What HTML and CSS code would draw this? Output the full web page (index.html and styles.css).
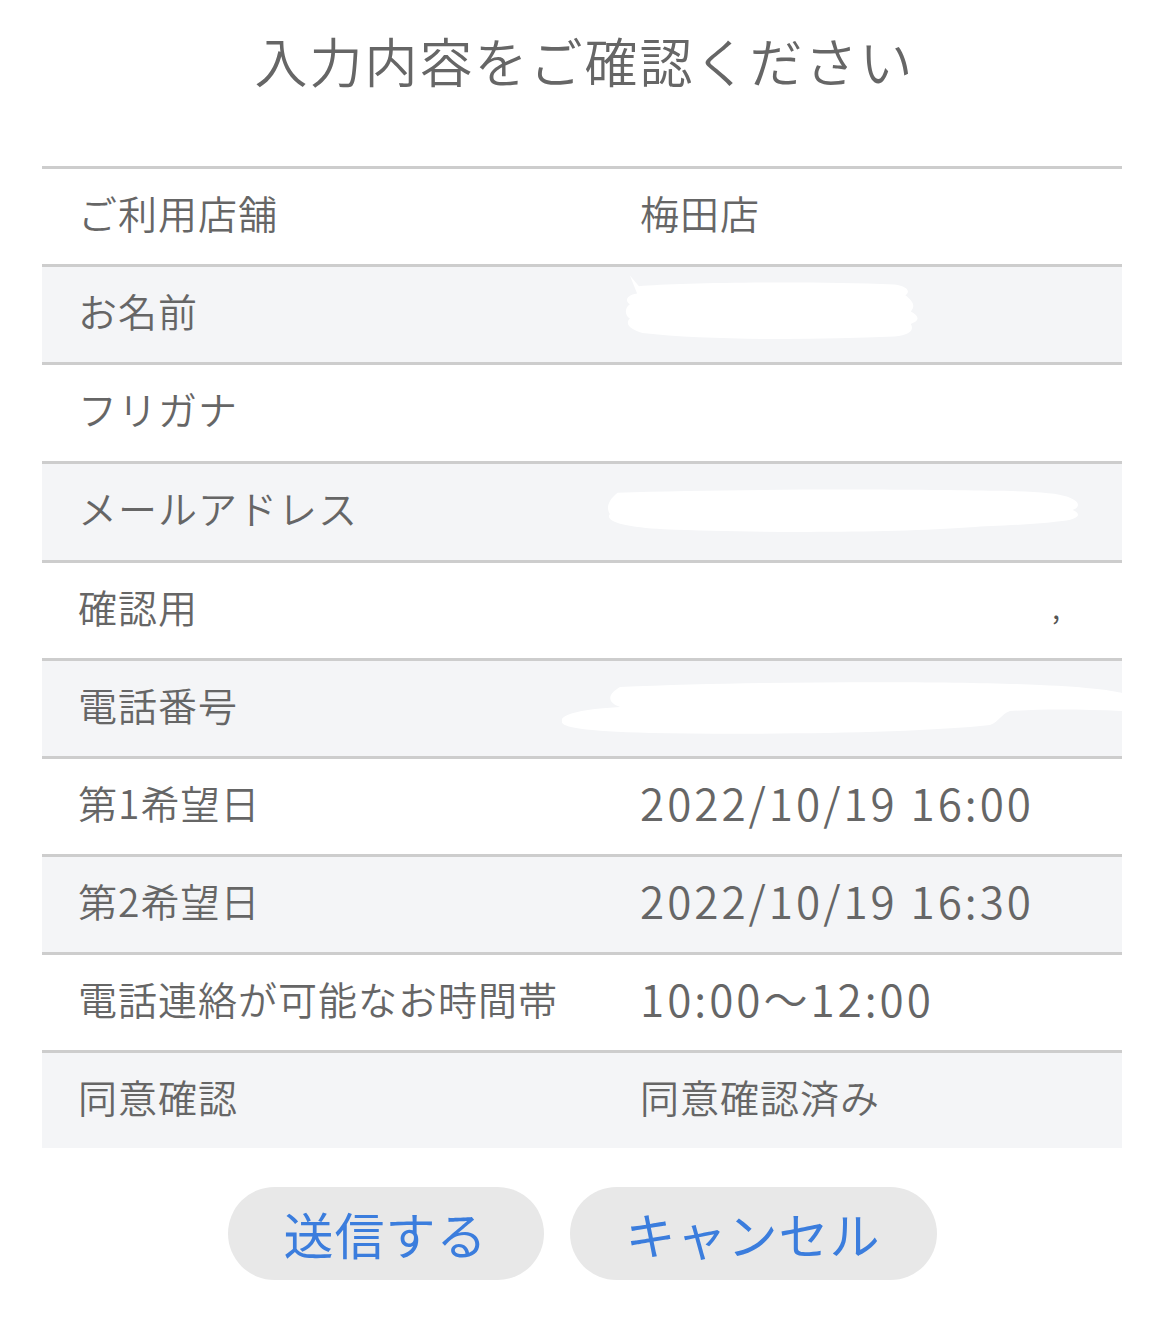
FILE: index.html
```html
<!DOCTYPE html>
<html lang="ja">
<head>
<meta charset="utf-8">
<title>入力内容をご確認ください</title>
<link rel="stylesheet" href="styles.css">
</head>
<body>
<main class="page">
  <h1 class="title">入力内容をご確認ください</h1>
  <div class="table">
    <div class="row">
      <div class="label">ご利用店舗</div>
      <div class="value">梅田店</div>
    </div>
    <div class="row alt">
      <div class="label">お名前</div>
      <div class="value">
        <svg class="mask mask-name" viewBox="0 0 330 80" aria-hidden="true">
          <path d="M6 6 L16 18 C60 14 200 12 300 16 C315 18 318 24 312 28 C320 34 324 40 318 46 C326 50 330 56 318 60 C322 66 318 72 300 74 C200 78 90 78 20 70 C6 66 0 60 6 54 C0 50 0 42 6 38 C0 34 2 28 14 26 Z" fill="#ffffff"/>
        </svg>
      </div>
    </div>
    <div class="row">
      <div class="label">フリガナ</div>
      <div class="value"></div>
    </div>
    <div class="row alt">
      <div class="label">メールアドレス</div>
      <div class="value">
        <svg class="mask mask-mail" viewBox="0 0 500 50" aria-hidden="true">
          <path d="M12 6 C120 2 300 2 400 4 C440 4 470 6 480 10 C492 14 496 20 486 24 C496 28 494 34 470 36 C440 40 400 40 380 42 C300 48 160 48 60 44 C20 42 -2 36 4 28 C0 22 2 14 12 6 Z" fill="#ffffff"/>
        </svg>
      </div>
    </div>
    <div class="row">
      <div class="label">確認用</div>
      <div class="value"><span class="frag">,</span></div>
    </div>
    <div class="row alt">
      <div class="label">電話番号</div>
      <div class="value">
        <svg class="mask mask-tel" viewBox="0 0 562 56" aria-hidden="true">
          <path d="M60 6 C200 0 400 0 480 4 C530 6 555 10 562 12 L562 30 C520 28 480 28 450 30 C440 34 440 40 430 44 C360 52 200 54 90 52 C20 50 0 46 2 40 C0 34 20 28 60 26 C48 22 46 14 60 6 Z" fill="#ffffff"/>
        </svg>
      </div>
    </div>
    <div class="row">
      <div class="label">第1希望日</div>
      <div class="value num">2022/10/19 16:00</div>
    </div>
    <div class="row alt">
      <div class="label">第2希望日</div>
      <div class="value num">2022/10/19 16:30</div>
    </div>
    <div class="row">
      <div class="label">電話連絡が可能なお時間帯</div>
      <div class="value num">10:00～12:00</div>
    </div>
    <div class="row alt last">
      <div class="label">同意確認</div>
      <div class="value">同意確認済み</div>
    </div>
  </div>
  <div class="actions">
    <button class="btn" type="button">送信する</button>
    <button class="btn" type="button">キャンセル</button>
  </div>
</main>
</body>
</html>
```
FILE: styles.css
```css
html, body {
  margin: 0;
  padding: 0;
  background: #ffffff;
}
body {
  font-family: "Noto Sans CJK JP", "Noto Sans", sans-serif;
  color: #666666;
}
.page {
  width: 1169px;
}
.title {
  margin: 0;
  padding-top: 22px;
  font-size: 53px;
  line-height: 76px;
  font-weight: 350;
  letter-spacing: 2px;
  text-align: center;
  color: #666666;
}
.table {
  margin: 68px 47px 0 42px;
  width: 1080px;
}
.row {
  display: grid;
  grid-template-columns: 598px 1fr;
  align-items: center;
  box-sizing: content-box;
  height: 85px;
  padding-bottom: 10px;
  border-top: 3px solid #cdcdcd;
  background: #ffffff;
  font-size: 39px;
  font-weight: 350;
  letter-spacing: 1px;
}
.row:nth-child(3), .row:nth-child(4) { height: 86px; }
.row.alt {
  background: #f4f5f7;
}
.label {
  padding-left: 36px;
  white-space: nowrap;
}
.value {
  position: relative;
  height: 100%;
  display: flex;
  align-items: center;
  white-space: nowrap;
}
.value.num {
  font-size: 44px;
  letter-spacing: 3px;
}
.mask {
  position: absolute;
  display: block;
}
.mask-name {
  left: -32px;
  top: 3px;
  width: 330px;
  height: 72px;
}
.mask-mail {
  left: -40px;
  top: 23px;
  width: 492px;
  height: 48px;
}
.mask-tel {
  left: -80px;
  top: 20px;
  width: 562px;
  height: 56px;
}
.frag {
  position: absolute;
  left: 412px;
  top: 21px;
  font-size: 30px;
  color: #555;
}
.actions {
  display: flex;
  justify-content: center;
  gap: 26px;
  margin-top: 39px;
  padding-right: 5px;
}
.btn {
  height: 93px;
  padding: 0 56px;
  border: none;
  border-radius: 47px;
  background: #e8e8e8;
  color: #3b7ddd;
  font-family: "Noto Sans CJK JP", "Noto Sans", sans-serif;
  font-size: 50px;
  line-height: 93px;
  font-weight: 400;
  letter-spacing: 1px;
  cursor: pointer;
}
```
